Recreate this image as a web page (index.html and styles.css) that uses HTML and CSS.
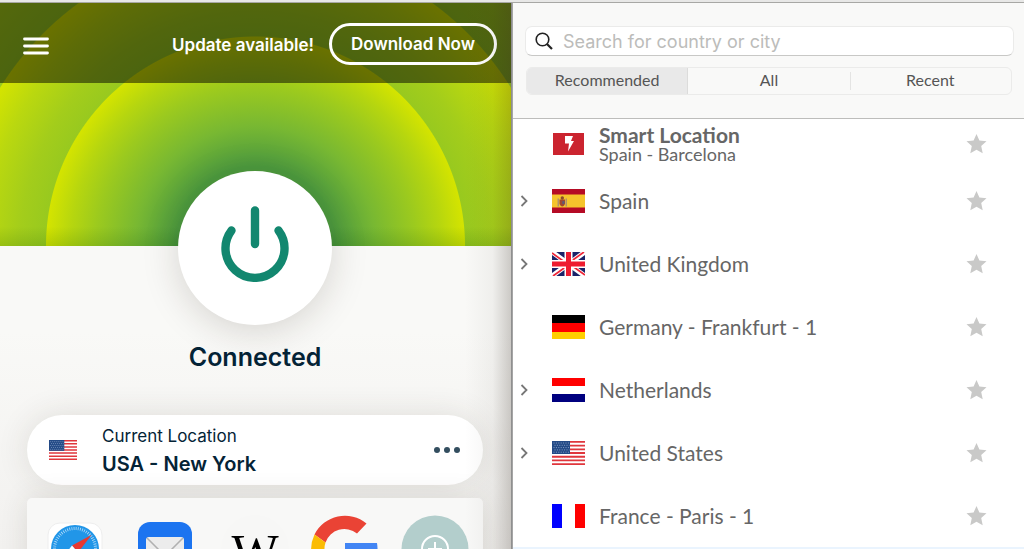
FILE: index.html
```html
<!DOCTYPE html>
<html lang="en">
<head>
<meta charset="utf-8">
<title>VPN</title>
<link rel="stylesheet" href="styles.css">
</head>
<body>
<svg class="defs" aria-hidden="true">
  <symbol id="star" viewBox="0 0 20 20"><path d="M10 0l2.900 6.600 7.100.7-5.300 4.800 1.500 7.200L10 15.700l-6.200 3.600 1.500-7.200L0 7.300l7.100-.7z"/></symbol>
  <symbol id="chevron" viewBox="0 0 8 14"><path d="M1.500 2l5 5-5 5" fill="none" stroke="#777" stroke-width="1.800"/></symbol>
  <symbol id="flag-us" viewBox="0 0 33 24" preserveAspectRatio="none">
    <rect width="33" height="24" fill="#fff"/>
    <path d="M0 .92h33M0 4.610h33M0 8.300h33M0 12h33M0 15.700h33M0 19.400h33M0 23.080h33" stroke="#e0363c" stroke-width="1.850"/>
    <rect width="18" height="13" fill="#234a86"/>
    <path d="M1.500 2h16M2.500 4.300h15M1.500 6.600h16M2.500 8.900h15M1.500 11.200h16" stroke="#9fb4d6" stroke-width=".8" stroke-dasharray="1 1.400"/>
  </symbol>
</svg>
<div class="topline"></div>
<div class="window">
  <main class="vpn">
    <section class="hero">
      <div class="banner">
        <button class="menu" aria-label="Menu"><svg viewBox="0 0 26 18" width="26" height="18"><path d="M1.500 2h23M1.500 9h23M1.500 16h23" stroke="#fff" stroke-width="2.800" stroke-linecap="round"/></svg></button>
        <span class="update">Update available!</span>
        <button class="download">Download Now</button>
      </div>
    </section>
    <section class="status">
      <button class="power" aria-label="Disconnect"><svg viewBox="0 0 68 76" width="68" height="76"><path d="M34 4.500v33.500M10.500 24.500a29.500 29.500 0 1 0 47 0" fill="none" stroke="#12876f" stroke-width="8.400" stroke-linecap="round"/></svg></button>
      <h1>Connected</h1>
      <button class="location">
        <svg class="flag-small"><use href="#flag-us"/></svg>
        <span class="place"><span>Current Location</span><strong>USA - New York</strong></span>
        <svg width="26" height="6" viewBox="0 0 26 6" fill="#334e5f"><circle cx="3" cy="3" r="3"/><circle cx="13" cy="3" r="3"/><circle cx="23" cy="3" r="3"/></svg>
      </button>
      <nav class="apps" aria-label="Shortcuts">
        <a href="#" aria-label="Safari"><svg viewBox="0 0 68 68">
          <rect x="7" y="8" width="54" height="54" rx="12" fill="#fff" stroke="#eee"/>
          <circle cx="34" cy="34" r="24" fill="#2196e8"/>
          <circle cx="34" cy="34" r="20.500" fill="none" stroke="#b5dcf8" stroke-width="3" stroke-dasharray=".8 1.350"/>
          <path d="M50.500 20L31 30.500l6 7z" fill="#e9382f"/><path d="M17.500 48L31 30.500l6 7z" fill="#fff"/>
        </svg></a>
        <a href="#" aria-label="Mail"><svg viewBox="0 0 68 68">
          <rect x="7" y="7" width="54" height="54" rx="12" fill="#1c74f0"/>
          <rect x="15" y="22" width="38" height="27" rx="3" fill="#ececec"/>
          <path d="M16 23l15 15q3 3 6 0l15-15" fill="none" stroke="#b0b0b0" stroke-width="1.500"/>
        </svg></a>
        <a href="#" aria-label="Wikipedia"><svg viewBox="0 0 68 68"><circle cx="34" cy="34" r="34" fill="#f7f7f6"/><text class="wiki" x="34" y="54" text-anchor="middle">W</text></svg></a>
        <a href="#" aria-label="Google"><svg viewBox="0 0 68 68">
          <path d="M3.500 19.500A34 34 0 0 1 55.500 8.500L46 18.500A20 20 0 0 0 14.500 27.500z" fill="#ea4335"/>
          <path d="M3.500 19.500a34 34 0 0 0 0 29l11-8.500a20 20 0 0 1 0-12.500z" fill="#fbbc05"/>
          <path d="M34 28h32q3 19-10 31L45 50q6-4 8-9H34z" fill="#4285f4"/>
          <path d="M3.500 48.500l11-8.500Q25 60 45 50l11 9Q23 80 3.500 48.500z" fill="#34a853"/>
        </svg></a>
        <a href="#" aria-label="Add shortcut"><svg viewBox="0 0 68 68"><circle cx="34" cy="34" r="33.500" fill="#b3cecc"/><circle cx="34" cy="34" r="13" fill="none" stroke="#fff" stroke-width="2"/><path d="M34 27v14M27 34h14" stroke="#fff" stroke-width="2"/></svg></a>
      </nav>
    </section>
  </main>
  <section class="picker">
    <header class="tools">
      <label class="search"><svg width="18" height="18" viewBox="0 0 18 18" fill="none" stroke="#222" stroke-width="1.600"><circle cx="7.500" cy="7.500" r="6.300"/><path d="M12 12l5 5" stroke-width="2.200"/></svg><input type="text" aria-label="Search" placeholder="Search for country or city"></label>
      <div class="tabs"><button class="active">Recommended</button><button>All</button><button>Recent</button></div>
    </header>
    <ul class="list">
      <li class="smart"><span></span><svg class="flag" viewBox="0 0 33 24"><rect x="1" y="1" width="31" height="22" fill="#cb242f"/><path d="M13 4h8l-2 5h3l-6 10.500 1-8h-4z" fill="#fff"/></svg><span class="name"><strong>Smart Location</strong><span>Spain - Barcelona</span></span><button class="star" aria-label="Favourite"><svg><use href="#star"/></svg></button></li>
      <li><button class="expand" aria-label="Expand"><svg><use href="#chevron"/></svg></button><svg class="flag" viewBox="0 0 33 24"><rect width="33" height="24" fill="#b50b25"/><rect y="5.500" width="33" height="13" fill="#f5c42c"/><path d="M5.500 9.500h1.500v8H5.500zM13.500 9.500H15v8h-1.500z" fill="#b3926b"/><path d="M7.500 10.500h5.500v4.500q-2.700 5-5.500 0z" fill="#a3472f"/><circle cx="10.300" cy="9" r="1.700" fill="#8c4b2b"/><path d="M10.300 12h2.200v3h-2.200z" fill="#5d5b76"/></svg><span class="name">Spain</span><button class="star" aria-label="Favourite"><svg><use href="#star"/></svg></button></li>
      <li><button class="expand" aria-label="Expand"><svg><use href="#chevron"/></svg></button><svg class="flag" viewBox="0 0 33 24"><rect width="33" height="24" fill="#1a2268"/><path d="M0 0l33 24M33 0L0 24" stroke="#fff" stroke-width="5"/><path d="M0 1l14 10M33 23L19 13M32 0L18 10M1 24l14-10" stroke="#ee2436" stroke-width="1.700"/><path d="M16.500 0v24M0 12h33" stroke="#fff" stroke-width="8"/><path d="M16.500 0v24M0 12h33" stroke="#ee1c30" stroke-width="5"/></svg><span class="name">United Kingdom</span><button class="star" aria-label="Favourite"><svg><use href="#star"/></svg></button></li>
      <li><span></span><svg class="flag" viewBox="0 0 33 24"><rect width="33" height="8" fill="#000"/><rect y="8" width="33" height="9" fill="#f00"/><rect y="17" width="33" height="7" fill="#ffcf00"/></svg><span class="name">Germany - Frankfurt - 1</span><button class="star" aria-label="Favourite"><svg><use href="#star"/></svg></button></li>
      <li><button class="expand" aria-label="Expand"><svg><use href="#chevron"/></svg></button><svg class="flag" viewBox="0 0 33 24"><rect width="33" height="8" fill="#f00"/><rect y="8" width="33" height="8" fill="#fff"/><rect y="16" width="33" height="8" fill="#00007f"/></svg><span class="name">Netherlands</span><button class="star" aria-label="Favourite"><svg><use href="#star"/></svg></button></li>
      <li><button class="expand" aria-label="Expand"><svg><use href="#chevron"/></svg></button><svg class="flag"><use href="#flag-us"/></svg><span class="name">United States</span><button class="star" aria-label="Favourite"><svg><use href="#star"/></svg></button></li>
      <li><span></span><svg class="flag" viewBox="0 0 33 24"><rect width="10" height="24" fill="#00f"/><rect x="10" width="13" height="24" fill="#fff"/><rect x="23" width="10" height="24" fill="#f00"/></svg><span class="name">France - Paris - 1</span><button class="star" aria-label="Favourite"><svg><use href="#star"/></svg></button></li>
      <li class="next"></li>
    </ul>
  </section>
</div>
</body>
</html>
```
FILE: styles.css
```css
* { box-sizing: border-box; }
body {
  margin: 0;
  height: 100vh;
  overflow: hidden;
  display: flex;
  flex-direction: column;
  font-family: Inter, "Liberation Sans", sans-serif;
  background: #fff;
}
button { border: 0; padding: 0; background: none; font: inherit; color: inherit; }
.defs { display: none; }
.topline { flex: none; height: 3px; background: #e8e8e7; border-bottom: 1px solid #a8a8a5; }
.window { flex: 1; min-height: 0; display: grid; grid-template-columns: 1fr 1fr; }
.vpn {
  position: relative;
  overflow: hidden;
  background: linear-gradient(#f9f9f7 60%, #f2f1ef);
  border-right: 1px solid #8f8f8f;
}
.vpn::after {
  content: "";
  position: absolute;
  inset: 0 0 0 auto;
  width: 46px;
  pointer-events: none;
  background: linear-gradient(to right, transparent, rgba(60, 50, 40, .05) 60%, rgba(60, 50, 40, .24));
}
.hero {
  height: 243px;
  background:
    linear-gradient(transparent 92%, rgba(0, 70, 0, .14)),
    radial-gradient(circle at 50% 100%, #4c9a3e 80px, #58a23c 90px, #78b832 120px, #9cca1e 160px, #b6d60f 185px, #d4e400 209px, #98c91f 210px, #a3cd1b 235px, #bad80f 270px, #d4e400 300px, #98c91f 301px, #a8d018 350px);
}
.banner {
  height: 80px;
  padding: 2px 14px 0 23px;
  display: flex;
  align-items: center;
  background: rgba(0, 0, 0, .5);
  color: #fff;
  font-weight: 600;
}
.menu { display: flex; margin-top: 4px; margin-right: auto; }
.update { font-size: 17px; margin: 2px 15px 0 0; }
.download { height: 42px; width: 168px; border: 3px solid #fff; border-radius: 21px; font-size: 17px; }
.status { display: flex; flex-direction: column; align-items: center; padding: 0 28px 0 27px; }
.power {
  position: relative;
  flex: none;
  display: grid;
  place-items: center;
  width: 154px;
  height: 154px;
  margin-top: -75px;
  padding-bottom: 8px;
  border-radius: 50%;
  background: #fff;
  box-shadow: 0 6px 36px rgba(40, 30, 20, .17);
}
h1 { margin: 16px 0 42px; font-size: 25px; line-height: 32px; font-weight: 600; color: #042336; }
.location {
  width: 100%;
  height: 70px;
  padding: 0 23px 0 22px;
  display: flex;
  align-items: center;
  text-align: left;
  border-radius: 35px;
  background: #fff;
  color: #042336;
  box-shadow: 0 0 32px rgba(60, 50, 30, .12);
}
.flag-small { width: 28px; height: 20px; }
.place { flex: 1; display: flex; flex-direction: column; margin-left: 25px; font-size: 17px; line-height: 28px; }
.place strong { font-size: 20px; font-weight: 600; }
.apps {
  width: 100%;
  margin-top: 13px;
  padding: 17px 3px;
  display: grid;
  grid-template-columns: repeat(5, 1fr);
  justify-items: center;
  border-radius: 5px;
  background: #f8f8f7;
  box-shadow: 0 0 28px rgba(60, 50, 30, .12);
}
.apps svg { display: block; width: 68px; height: 68px; }
.wiki { font: 50px "Liberation Serif", serif; }
.picker { border-left: 1px solid #a5a5a5; display: flex; flex-direction: column; font-family: Lato, sans-serif; color: #666; }
.tools { padding: 23px 10px 23px 12px; background: #f9f9f8; border-bottom: 1px solid #bdbdbb; }
.search {
  display: flex;
  align-items: center;
  gap: 10px;
  height: 30px;
  padding: 0 9px;
  border: 1px solid #ebebea;
  border-bottom-color: #c8c8c6;
  border-radius: 7px;
  background: #fff;
}
.search input { flex: 1; min-width: 0; padding: 0; border: 0; outline: 0; background: none; font: 18px Inter, sans-serif; }
.search input::placeholder { color: #bcbcba; opacity: 1; }
.tabs {
  display: grid;
  grid-template-columns: 1fr 1fr 1fr;
  height: 28px;
  margin: 11px 2px 0 1px;
  border: 1px solid #ebebea;
  border-radius: 6px;
  overflow: hidden;
  font-size: 16px;
  line-height: 24px;
  color: #555;
}
.tabs button { padding-bottom: 2px; }
.tabs .active { background: #e9e9e9; border-right: 1px solid #dcdcdb; }
.tabs button:last-child { background: linear-gradient(#e4e4e3, #e4e4e3) left center / 1px 18px no-repeat; }
.list { margin: 0; padding: 0; flex: 1; list-style: none; display: flex; flex-direction: column; }
.list li {
  flex: none;
  height: 63px;
  padding: 0 37px 0 7px;
  display: grid;
  grid-template-columns: 32px 33px 1fr 21px;
  align-items: center;
  font-size: 21px;
}
.list .smart { height: 50px; }
.list .next { flex: 1; height: auto; padding: 0; background: #eaf4fe; }
.expand svg { display: block; width: 8px; height: 14px; }
.flag { width: 33px; height: 24px; }
.name { margin-left: 14px; }
.smart .name { display: flex; flex-direction: column; font-size: 18px; line-height: 19px; }
.smart strong { font-size: 21px; line-height: 21px; }
.star svg { display: block; width: 21px; height: 20px; fill: #c9c9c8; }
```
